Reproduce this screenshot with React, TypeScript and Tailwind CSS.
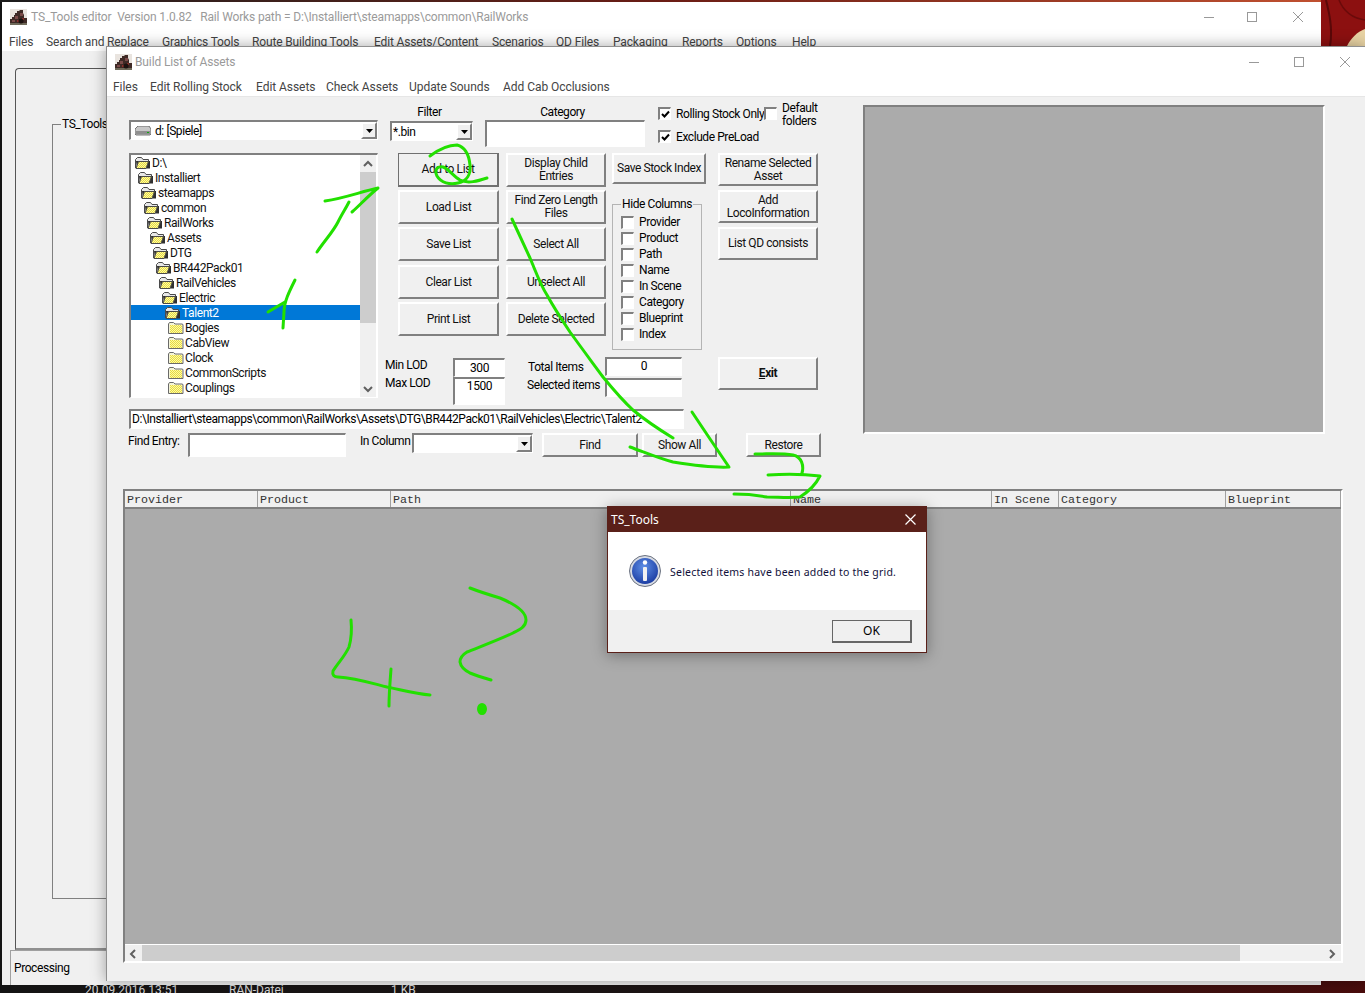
import React from 'react';

const UI_FONT = 'font-["Roboto",sans-serif] tracking-[-0.42px] whitespace-nowrap';

const MAIN_MENU = [
  { label: 'Files', width: 37 },
  { label: 'Search and Replace', width: 116 },
  { label: 'Graphics Tools', width: 90 },
  { label: 'Route Building Tools', width: 122 },
  { label: 'Edit Assets/Content', width: 118 },
  { label: 'Scenarios', width: 64 },
  { label: 'QD Files', width: 57 },
  { label: 'Packaging', width: 69 },
  { label: 'Reports', width: 54 },
  { label: 'Options', width: 56 },
  { label: 'Help', width: 40 },
];

const BUILD_MENU = [
  { label: 'Files', width: 37 },
  { label: 'Edit Rolling Stock', width: 106 },
  { label: 'Edit Assets', width: 70 },
  { label: 'Check Assets', width: 83 },
  { label: 'Update Sounds', width: 94 },
  { label: 'Add Cab Occlusions', width: 120 },
];

const TREE_ROWS = [
  { label: 'D:\\', depth: 0, open: true },
  { label: 'Installiert', depth: 1, open: true },
  { label: 'steamapps', depth: 2, open: true },
  { label: 'common', depth: 3, open: true },
  { label: 'RailWorks', depth: 4, open: true },
  { label: 'Assets', depth: 5, open: true },
  { label: 'DTG', depth: 6, open: true },
  { label: 'BR442Pack01', depth: 7, open: true },
  { label: 'RailVehicles', depth: 8, open: true },
  { label: 'Electric', depth: 9, open: true },
  { label: 'Talent2', depth: 10, open: true, selected: true },
  { label: 'Bogies', depth: 11 },
  { label: 'CabView', depth: 11 },
  { label: 'Clock', depth: 11 },
  { label: 'CommonScripts', depth: 11 },
  { label: 'Couplings', depth: 11 },
  { label: '', depth: 11 },
];

const HIDE_COLUMNS = ['Provider', 'Product', 'Path', 'Name', 'In Scene', 'Category', 'Blueprint', 'Index'];

const GRID_COLUMNS = [
  { label: 'Provider', width: 133 },
  { label: 'Product', width: 133 },
  { label: 'Path', width: 400 },
  { label: 'Name', width: 201 },
  { label: 'In Scene', width: 67 },
  { label: 'Category', width: 167 },
  { label: 'Blueprint', width: 115 },
];

const sunken =
  'border-t-2 border-l-2 border-b border-r border-t-[#808080] border-l-[#808080] border-b-white border-r-white bg-white';
const raised =
  'border-t-2 border-l-2 border-b-2 border-r-2 border-t-white border-l-white border-b-[#808080] border-r-[#808080] bg-[#f0f0f0]';

function LocoIcon() {
  return (
    <svg width="17" height="16" viewBox="0 0 17 16" className="shrink-0">
      <rect width="17" height="16" fill="#e9e4df" />
      <path d="M0 15V10h2V8h2V6h1V4h2V2h2l1-1h3v3l1 2v3h3v6z" fill="#3f2a26" />
      <path d="M5 7h3v3H5zM10 4h3v3h-3zM2 11h3v2H2z" fill="#7a4a48" />
      <path d="M7 11h2v2H7zM12 9h2v2h-2z" fill="#8a2f2a" />
      <path d="M0 14h17v2H0z" fill="#6f6a5a" />
      <circle cx="11" cy="12" r="2.5" fill="#1c1210" />
    </svg>
  );
}

function WindowControls({ gapA, gapB }: { gapA: string; gapB: string }) {
  return (
    <div className="flex items-center">
      <svg width="10" height="10" viewBox="0 0 10 10">
        <path d="M0 5.5h10" stroke="#999" />
      </svg>
      <svg width="10" height="10" viewBox="0 0 10 10" className={gapA}>
        <rect x="0.5" y="0.5" width="9" height="9" fill="none" stroke="#999" />
      </svg>
      <svg width="10" height="10" viewBox="0 0 10 10" className={gapB}>
        <path d="M0 0l10 10M10 0L0 10" stroke="#999" />
      </svg>
    </div>
  );
}

function Btn({ className, children, isDefault }: { className: string; children: React.ReactNode; isDefault?: boolean }) {
  return (
    <div
      className={`flex items-center justify-center text-center text-xs leading-[13px] text-[#111] ${className} ${
        isDefault ? 'border-t border-l border-b-2 border-r-2 border-[#707070] bg-[#f0f0f0]' : raised
      }`}
    >
      <span>{children}</span>
    </div>
  );
}

function DropArrow() {
  return (
    <div className={`flex h-full w-[16px] shrink-0 items-center justify-center ${raised}`}>
      <svg width="7" height="4" viewBox="0 0 7 4">
        <path d="M0 0h7L3.5 4z" fill="#000" />
      </svg>
    </div>
  );
}

function CheckBox({ checked }: { checked?: boolean }) {
  return (
    <div className={`flex h-[13px] w-[13px] shrink-0 items-center justify-center ${sunken}`}>
      {checked && (
        <svg width="9" height="9" viewBox="0 0 9 9">
          <path d="M1 4l2.5 2.5L8 1.5" fill="none" stroke="#000" strokeWidth="2" />
        </svg>
      )}
    </div>
  );
}

function FolderIcon({ open }: { open?: boolean }) {
  return (
    <svg width="16" height="14" viewBox="0 0 16 14" className="shrink-0">
      <defs>
        <pattern id="dither" width="2" height="2" patternUnits="userSpaceOnUse">
          <rect width="2" height="2" fill="#ffff9c" />
          <rect width="1" height="1" fill="#e6d64a" />
          <rect x="1" y="1" width="1" height="1" fill="#e6d64a" />
        </pattern>
      </defs>
      {open ? (
        <>
          <path d="M0.5 12V3.5l2-2h4l1.5 2h5.5v3" fill="#e8e8e8" stroke="#4a4a4a" />
          <path d="M1 5h10l3 0 1 0v7.5H2z" fill="#303030" />
          <path d="M1 12.5l2.5-7h10l-2.5 7z" fill="url(#dither)" stroke="#4a4a4a" />
        </>
      ) : (
        <>
          <path d="M0.5 12.5V3l1-1.5h4l1.5 1.5h7.5l0.5 1v8.5z" fill="#f4f4d8" stroke="#6a6a6a" />
          <rect x="2" y="4" width="12" height="8" fill="url(#dither)" />
        </>
      )}
    </svg>
  );
}

function ScrollArrow({ dir }: { dir: 'up' | 'down' | 'left' | 'right' }) {
  const paths = {
    up: 'M1 6l4-4 4 4',
    down: 'M1 2l4 4 4-4',
    left: 'M6 1L2 5l4 4',
    right: 'M3 1l4 4-4 4',
  };
  return (
    <svg width="10" height="10" viewBox="0 0 10 8" className="overflow-visible">
      <path d={paths[dir]} fill="none" stroke="#606060" strokeWidth="2" />
    </svg>
  );
}

function FolderTree() {
  return (
    <div className={`flex h-[245px] ${sunken}`}>
      <div className="w-[229px] overflow-hidden">
        {TREE_ROWS.map((row) => (
          <div
            key={row.label || 'clipped'}
            className={`flex h-[15px] items-center text-xs ${row.selected ? 'bg-[#0078d7] text-white' : 'text-[#111]'}`}
            style={{ paddingLeft: 4 + row.depth * 3 }}
          >
            <FolderIcon open={row.open} />
            <span className="ml-px">{row.label}</span>
          </div>
        ))}
      </div>
      <div className="flex w-[16px] flex-col bg-[#f0f0f0]">
        <div className="flex h-[17px] items-center justify-center">
          <ScrollArrow dir="up" />
        </div>
        <div className="h-[151px] bg-[#cdcdcd]" />
        <div className="flex-1" />
        <div className="flex h-[17px] items-center justify-center">
          <ScrollArrow dir="down" />
        </div>
      </div>
    </div>
  );
}

function AssetGrid() {
  return (
    <div className="ml-[16px] mt-[32px] flex h-[474px] w-[1220px] flex-col border-t-2 border-l-2 border-r-2 border-b-2 border-t-[#808080] border-l-[#808080] border-r-white border-b-white">
      <div className="flex h-[18px] shrink-0 border-b-2 border-[#808080] bg-[#f0f0f0]">
        {GRID_COLUMNS.map((col) => (
          <div
            key={col.label}
            className='border-r border-[#a0a0a0] pl-[2px] font-["Liberation_Mono",monospace] text-[11.67px] leading-[19px] tracking-normal text-[#333]'
            style={{ width: col.width }}
          >
            {col.label}
          </div>
        ))}
      </div>
      <div className="flex-1 border-b border-white bg-[#ababab]" />
      <div className="flex h-[16px] shrink-0 bg-[#f0f0f0]">
        <div className="flex w-[17px] items-center justify-center">
          <ScrollArrow dir="left" />
        </div>
        <div className="w-[1098px] bg-[#cdcdcd]" />
        <div className="flex flex-1 items-center justify-end pr-[4px]">
          <ScrollArrow dir="right" />
        </div>
      </div>
    </div>
  );
}

function BuildWindow() {
  return (
    <div
      className={`absolute left-[106px] top-[46px] flex h-[935px] w-[1259px] flex-col border-t border-l border-[#8f8f8f] bg-[#f0f0f0] shadow-[0_0_14px_rgba(0,0,0,0.35)] ${UI_FONT}`}
    >
      <div className="flex h-[29px] shrink-0 items-center justify-between bg-white pl-[8px] pr-[15px]">
        <div className="flex items-center gap-[3px] text-xs tracking-[-0.12px] text-[#9a9a9a]">
          <LocoIcon />
          <span>Build List of Assets</span>
        </div>
        <WindowControls gapA="ml-[35px]" gapB="ml-[36px]" />
      </div>
      <div className="flex h-[20px] shrink-0 items-center bg-white pl-[6px] pt-[2px] text-xs tracking-[-0.05px] text-[#444]">
        {BUILD_MENU.map((item) => (
          <span key={item.label} style={{ width: item.width }}>
            {item.label}
          </span>
        ))}
      </div>
      <div className="h-px shrink-0 bg-[#e6e6e6]" />

      <div className="flex flex-col">
        <div className="flex pl-[22px]">
          <div className="w-[692px] pt-[3px]">
            <div className="flex h-[305px]">
              <div className="w-[249px]">
                <div className={`mt-[20px] flex h-[20px] items-center pl-[4px] text-xs ${sunken}`}>
                  <svg width="16" height="10" viewBox="0 0 16 10" className="shrink-0">
                    <path d="M3 0h11l2 3v5l-1 1H1L0 8V3z" fill="#c8c8c8" stroke="#444" strokeWidth="0.7" />
                    <rect x="1" y="5" width="14" height="3" fill="#8f8f8f" />
                    <rect x="12" y="6" width="2" height="1" fill="#1a1" />
                  </svg>
                  <span className="ml-[4px] flex-1">d: [Spiele]</span>
                  <DropArrow />
                </div>
                <div className="mt-[13px]">
                  <FolderTree />
                </div>
              </div>

              <div className="ml-[7px] w-[436px]">
                <div className="flex h-[53px]">
                  <div className="ml-[5px] w-[83px] pt-[5px]">
                    <div className="h-[16px] pr-[4px] text-center text-xs leading-[14px]">Filter</div>
                    <div className={`flex h-[20px] items-center pl-px text-xs ${sunken}`}>
                      <span className="flex-1">*.bin</span>
                      <DropArrow />
                    </div>
                  </div>
                  <div className="ml-[12px] w-[160px] pt-[4px]">
                    <div className="h-[16px] pr-[5px] text-center text-xs leading-[16px]">Category</div>
                    <div className={`h-[27px] ${sunken}`} />
                  </div>
                  <div className="ml-[13px] pt-[7px] text-xs">
                    <div className="flex h-[13px] items-center">
                      <CheckBox checked />
                      <span className="ml-[5px] w-[88px]">Rolling Stock Only</span>
                      <CheckBox />
                      <span className="ml-[5px] mt-[2px] leading-[13px]">
                        Default
                        <br />
                        folders
                      </span>
                    </div>
                    <div className="mt-[10px] flex h-[13px] items-center">
                      <CheckBox checked />
                      <span className="ml-[5px]">Exclude PreLoad</span>
                    </div>
                  </div>
                </div>

                <div className="ml-[13px] flex h-[197px] items-start">
                  <div className="flex w-[101px] flex-col gap-[3px]">
                    <Btn className="h-[34px]" isDefault>
                      Add to List
                    </Btn>
                    <Btn className="h-[34px]">Load List</Btn>
                    <Btn className="h-[34px]">Save List</Btn>
                    <Btn className="mt-px h-[34px]">Clear List</Btn>
                    <Btn className="h-[34px]">Print List</Btn>
                  </div>
                  <div className="ml-[7px] flex w-[100px] flex-col gap-[3px]">
                    <Btn className="h-[34px]">
                      Display Child
                      <br />
                      Entries
                    </Btn>
                    <Btn className="h-[34px]">
                      Find Zero Length
                      <br />
                      Files
                    </Btn>
                    <Btn className="h-[34px]">Select All</Btn>
                    <Btn className="mt-px h-[34px]">Unselect All</Btn>
                    <Btn className="h-[34px]">Delete Selected</Btn>
                  </div>
                  <div className="ml-[6px] w-[94px]">
                    <Btn className="h-[31px]">Save Stock Index</Btn>
                    <fieldset className="mt-[13px] h-[153px] w-[90px] border border-[#b4b4b4] pl-[8px] text-xs">
                      <legend className="px-px leading-[14px]">Hide Columns</legend>
                      <div className="mt-[3px]">
                        {HIDE_COLUMNS.map((name) => (
                          <div key={name} className="flex h-[16px] items-center gap-[5px]">
                            <CheckBox />
                            <span>{name}</span>
                          </div>
                        ))}
                      </div>
                    </fieldset>
                  </div>
                  <div className="ml-[12px] flex w-[100px] flex-col gap-[3px]">
                    <Btn className="h-[33px]">
                      Rename Selected
                      <br />
                      Asset
                    </Btn>
                    <Btn className="mt-px h-[33px]">
                      Add
                      <br />
                      LocoInformation
                    </Btn>
                    <Btn className="mt-px h-[33px]">List QD consists</Btn>
                  </div>
                </div>

                <div className="mt-[7px] flex items-start text-xs">
                  <div className="w-[68px] -mt-px leading-[18px]">
                    <div>Min LOD</div>
                    <div>Max LOD</div>
                  </div>
                  <div className="w-[52px]">
                    <div className={`mt-px h-[19px] text-center leading-[16px] ${sunken}`}>300</div>
                    <div className={`h-[28px] text-center leading-[14px] ${sunken}`}>1500</div>
                  </div>
                  <div className="ml-[22px] w-[78px] pt-px leading-[18px]">
                    <div className="pl-px">Total Items</div>
                    <div>Selected items</div>
                  </div>
                  <div className="w-[77px]">
                    <div className={`h-[19px] text-center leading-[15px] ${sunken}`}>0</div>
                    <div className={`mt-[2px] h-[19px] ${sunken}`} />
                  </div>
                  <Btn className="ml-[36px] h-[33px] w-[100px] font-bold">
                    <span className="underline">E</span>xit
                  </Btn>
                </div>
              </div>
            </div>

            <div className={`mt-[4px] h-[20px] w-[555px] pl-px text-xs leading-[16px] ${sunken}`}>
              {'D:\\Installiert\\steamapps\\common\\RailWorks\\Assets\\DTG\\BR442Pack01\\RailVehicles\\Electric\\Talent2'}
            </div>

            <div className="mt-[4px] flex items-start text-xs">
              <div className="-ml-px w-[60px] pt-[1px] leading-[14px]">Find Entry:</div>
              <div className={`h-[24px] w-[158px] ${sunken}`} />
              <div className="ml-[14px] w-[52px] pt-[1px] leading-[14px]">In Column</div>
              <div className={`flex h-[20px] w-[121px] justify-end ${sunken}`}>
                <DropArrow />
              </div>
              <Btn className="ml-[9px] h-[24px] w-[96px]">Find</Btn>
              <Btn className="ml-[4px] h-[24px] w-[75px]">Show All</Btn>
              <Btn className="ml-[29px] h-[24px] w-[75px]">Restore</Btn>
            </div>
          </div>

          <div className="ml-[42px] mt-[8px] h-[329px] w-[462px] border-t-2 border-l-2 border-b-2 border-r-2 border-t-[#808080] border-l-[#808080] border-b-white border-r-white bg-[#ababab]" />
        </div>

        <AssetGrid />
      </div>
    </div>
  );
}

function MainWindow() {
  return (
    <div className={`absolute left-[2px] top-[2px] flex h-[983px] w-[1319px] flex-col bg-[#f0f0f0] ${UI_FONT}`}>
      <div className="flex h-[30px] shrink-0 items-center justify-between bg-white pl-[8px] pr-[18px]">
        <div className="flex items-center gap-[4px] whitespace-pre text-xs tracking-[-0.15px] text-[#9a9a9a]">
          <LocoIcon />
          <span>{'TS_Tools editor  Version 1.0.82   Rail Works path = D:\\Installiert\\steamapps\\common\\RailWorks'}</span>
        </div>
        <WindowControls gapA="ml-[33px]" gapB="ml-[36px]" />
      </div>
      <div className="flex h-[19px] shrink-0 items-center bg-white pl-[7px] pt-[1px] text-xs tracking-[-0.15px] text-[#444]">
        {MAIN_MENU.map((item) => (
          <span key={item.label} style={{ width: item.width }}>
            {item.label}
          </span>
        ))}
      </div>
      <div className="ml-[13px] mt-[17px] h-[882px] rounded-tl-[4px] border-t border-l border-b-2 border-[#555] border-b-[#909090] pl-[36px] pt-[48px]">
        <fieldset className="h-[782px] border-t border-l border-b border-[#808080]">
          <legend className="ml-[8px] px-px text-xs leading-[14px]">TS_Tools</legend>
        </fieldset>
      </div>
      <div className="ml-[8px] flex-1 border-t border-l border-[#a0a0a0] pl-[3px] pt-[9px] text-xs">Processing</div>
    </div>
  );
}

function Annotations() {
  return (
    <svg
      width="1365"
      height="993"
      viewBox="0 0 1365 993"
      className="pointer-events-none absolute left-0 top-0"
      fill="none"
      stroke="#22e000"
      strokeWidth="3"
      strokeLinecap="round"
      strokeLinejoin="round"
    >
      <path d="M268 312L285 302M295 280C289 292 284 302 284 312L283 328" />
      <path d="M317 252C325 240 333 232 338 222C342 214 346 208 349 202" />
      <path d="M325 201C345 198 360 192 378 188C368 196 360 205 352 212" />
      <path d="M430 156C438 150 448 145 457 145C465 147 469 155 470 165C471 174 467 181 458 183C450 185 441 183 437 176C434 170 437 166 443 167C449 169 453 176 460 180C468 184 478 181 487 178" />
      <path d="M512 219C518 232 524 245 530 258C536 272 540 284 547 295C554 308 562 320 570 332C580 346 592 362 603 377C612 388 622 400 633 410C646 421 660 430 673 438" />
      <path d="M692 412C704 430 716 448 729 467C712 468 692 465 673 462C658 458 644 452 630 447" />
      <path d="M755 454C770 454 782 453 793 455C802 457 804 466 802 473M768 475C785 474 803 474 820 476C816 484 808 492 800 497C789 498 778 497 767 497C756 495 745 494 734 494" />
      <path d="M351 620C352 630 351 640 349 647C345 656 338 663 333 671C332 675 334 677 338 677C355 678 371 683 387 687C402 690 416 694 430 695" />
      <path d="M391 669C390 682 389 694 389 706" />
      <path d="M470 588C480 592 490 595 500 598C512 603 526 611 526 620C526 627 519 630 513 633C498 640 482 646 467 652C462 655 460 658 460 662C461 668 466 671 470 673C477 676 484 678 491 680" />
      <ellipse cx="482" cy="709" rx="4" ry="5" fill="#22e000" strokeWidth="2" />
    </svg>
  );
}

function MessageDialog() {
  return (
    <div className='absolute left-[607px] top-[506px] flex h-[147px] w-[320px] flex-col border border-[#5a2019] bg-white shadow-[0_2px_14px_rgba(0,0,0,0.35)] font-["Noto_Sans",sans-serif]'>
      <div className="flex h-[25px] shrink-0 items-center justify-between bg-[#5a2019] pl-[3px] pr-[10px] text-xs text-white">
        <span>TS_Tools</span>
        <svg width="11" height="11" viewBox="0 0 11 11">
          <path d="M0.5 0.5l10 10M10.5 0.5l-10 10" stroke="#fff" strokeWidth="1.2" />
        </svg>
      </div>
      <div className="flex h-[78px] shrink-0 items-center pl-[21px]">
        <svg width="32" height="32" viewBox="0 0 32 32" className="shrink-0">
          <defs>
            <radialGradient id="infoFill" cx="0.45" cy="0.35" r="0.75">
              <stop offset="0" stopColor="#5f8fe6" />
              <stop offset="1" stopColor="#12329a" />
            </radialGradient>
          </defs>
          <circle cx="16" cy="16" r="15.5" fill="#d7dbe4" stroke="#6b7280" />
          <circle cx="16" cy="16" r="13" fill="url(#infoFill)" />
          <circle cx="16" cy="7.5" r="2.2" fill="#fff" />
          <rect x="14" y="12" width="4" height="14" rx="1" fill="#f2f2f2" />
        </svg>
        <span className="ml-[9px] mt-[3px] whitespace-nowrap text-[10.5px] tracking-[0.22px] text-[#10103a]">
          Selected items have been added to the grid.
        </span>
      </div>
      <div className="flex flex-1 items-start justify-end bg-[#f0f0f0] pr-[14px] pt-[10px]">
        <div className="flex h-[23px] w-[80px] items-center justify-center border-t border-l border-b-2 border-r-2 border-[#666] bg-[#f0f0f0] text-xs">
          OK
        </div>
      </div>
    </div>
  );
}

function Desktop() {
  return (
    <>
      <div className="absolute left-0 top-0 h-[2px] w-[1321px] bg-linear-to-r from-[#1c1c1c] via-[#6a1c14] to-[#c05030]" />
      <div className="absolute left-[1321px] top-0 h-[46px] w-[44px] overflow-hidden bg-[#8c1010]">
        <svg width="44" height="46" viewBox="0 0 44 46">
          <path d="M5 0C8 12 12 28 9 46" stroke="#5a0808" strokeWidth="2" fill="none" />
          <path d="M18 0C22 10 30 18 44 20" stroke="#6a0a0a" strokeWidth="1.5" fill="none" />
          <path d="M26 46C30 38 36 32 44 29V46z" fill="#e8d3a4" />
        </svg>
      </div>
      <div className='absolute bottom-0 left-0 h-[12px] w-full bg-linear-to-r from-[#141414] via-[#1c1414] to-[#4a0c0c] font-["Roboto",sans-serif] text-xs leading-[14px] text-[#d8d8d8]'>
        <span className="absolute left-[85px] top-[2px]">20.09.2016 13:51</span>
        <span className="absolute left-[229px] top-[2px]">RAN-Datei</span>
        <span className="absolute left-[391px] top-[2px]">1 KB</span>
      </div>
    </>
  );
}

export default function App() {
  return (
    <div className="relative h-[993px] w-[1365px] overflow-hidden bg-[#141414]">
      <Desktop />
      <MainWindow />
      <BuildWindow />
      <Annotations />
      <MessageDialog />
    </div>
  );
}
